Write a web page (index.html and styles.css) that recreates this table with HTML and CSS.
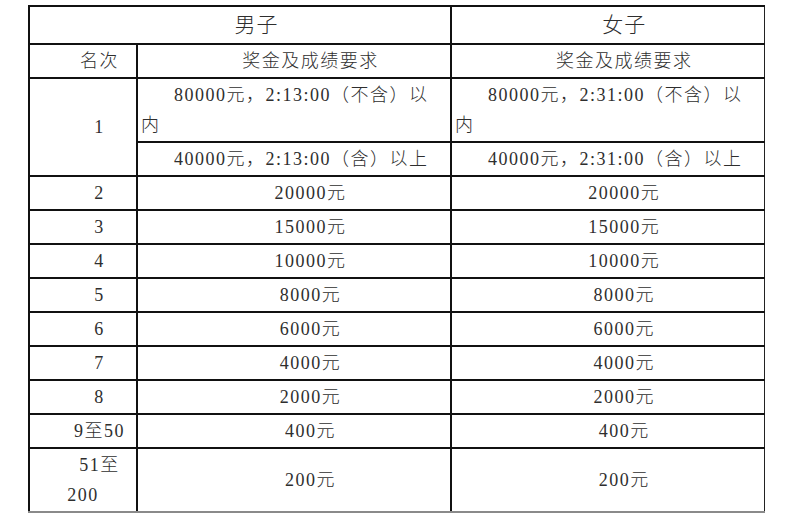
FILE: index.html
```html
<!DOCTYPE html>
<html lang="zh-CN">
<head>
<meta charset="utf-8">
<title>奖金</title>
<link rel="stylesheet" href="styles.css">
</head>
<body>
<table class="prize">
  <colgroup>
    <col class="c-rank">
    <col class="c-men">
    <col class="c-women">
  </colgroup>
  <tr class="r-head">
    <th colspan="2">男子</th>
    <th class="last-col">女子</th>
  </tr>
  <tr>
    <td>名次</td>
    <td>奖金及成绩要求</td>
    <td class="last-col">奖金及成绩要求</td>
  </tr>
  <tr class="r-double">
    <td rowspan="2">1</td>
    <td class="left">80000元，2:13:00（不含）以<br>内</td>
    <td class="left last-col">80000元，2:31:00（不含）以<br>内</td>
  </tr>
  <tr>
    <td class="left">40000元，2:13:00（含）以上</td>
    <td class="left last-col">40000元，2:31:00（含）以上</td>
  </tr>
  <tr><td>2</td><td>20000元</td><td class="last-col">20000元</td></tr>
  <tr><td>3</td><td>15000元</td><td class="last-col">15000元</td></tr>
  <tr><td>4</td><td>10000元</td><td class="last-col">10000元</td></tr>
  <tr><td>5</td><td>8000元</td><td class="last-col">8000元</td></tr>
  <tr><td>6</td><td>6000元</td><td class="last-col">6000元</td></tr>
  <tr><td>7</td><td>4000元</td><td class="last-col">4000元</td></tr>
  <tr><td>8</td><td>2000元</td><td class="last-col">2000元</td></tr>
  <tr><td>9至50</td><td>400元</td><td class="last-col">400元</td></tr>
  <tr class="r-last"><td>51至200</td><td>200元</td><td class="last-col">200元</td></tr>
</table>
</body>
</html>
```
FILE: styles.css
```css
html, body {
  margin: 0;
  background: #ffffff;
}
body {
  padding: 5px 0 0 28px;
  font-family: "Liberation Serif", "Noto Sans CJK SC", serif;
  font-weight: 300;
  color: #2e2e2e;
}
.prize {
  border-collapse: collapse;
  table-layout: fixed;
  width: 735px;
}
.c-rank { width: 108px; }
.c-men { width: 314px; }
.c-women { width: 313px; }
.prize td,
.prize th {
  border: 2px solid #111111;
  padding: 1px 3px;
  text-align: center;
  text-indent: 33px;
  font-size: 18px;
  letter-spacing: 1.5px;
  line-height: 30px;
  font-weight: 300;
  vertical-align: middle;
}
.prize th {
  font-size: 21px;
  letter-spacing: 1px;
  line-height: 36px;
  padding: 0 3px;
}
.prize .left {
  text-align: left;
}
.prize .last-col {
  border-right: 1px solid #222222;
}
.r-last td {
  border-bottom: 2px solid #8a8a8a;
}
```
